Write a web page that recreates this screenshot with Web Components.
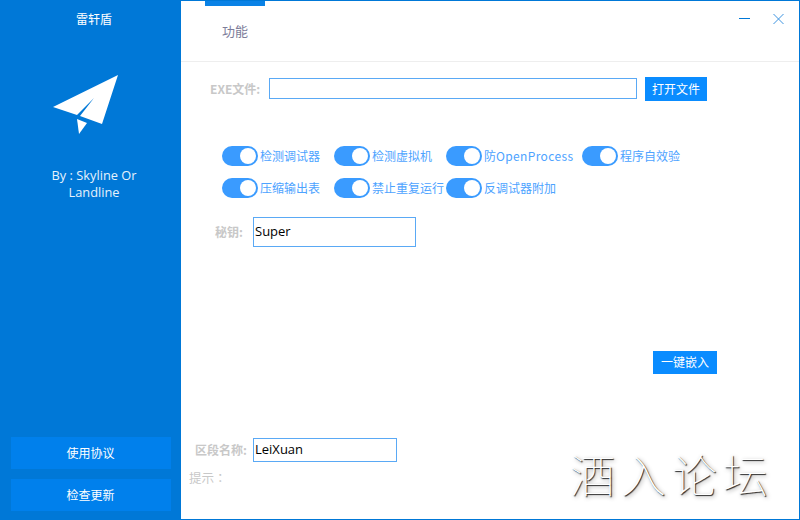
<!DOCTYPE html>
<html lang="zh">
<head>
<meta charset="utf-8">
<title>雷轩盾</title>
<style>
  html, body { margin: 0; height: 100%; overflow: hidden; background: #fff; }
  body { font: 12px/1.4 "Noto Sans CJK SC", "Open Sans", sans-serif; }
</style>
</head>
<body>
<app-window>
  <side-bar slot="side" title-text="雷轩盾" author="By : Skyline Or Landline">
    <flat-button slot="actions" wide>使用协议</flat-button>
    <flat-button slot="actions" wide>检查更新</flat-button>
  </side-bar>
  <tab-header slot="head" tab="功能"></tab-header>

  <form-row label="EXE文件:" style="--label-w:49px;--pad:29px;--gap:10px;--top:15px">
    <text-box style="--w:368px;--h:21px;margin-bottom:1px"></text-box>
    <flat-button style="--w:62px;--h:24px;margin-left:8px">打开文件</flat-button>
  </form-row>

  <switch-grid>
    <toggle-switch>检测调试器</toggle-switch>
    <toggle-switch>检测虚拟机</toggle-switch>
    <toggle-switch>防<span style="letter-spacing:.36px">OpenProcess</span></toggle-switch>
    <toggle-switch>程序自效验</toggle-switch>
    <toggle-switch>压缩输出表</toggle-switch>
    <toggle-switch>禁止重复运行</toggle-switch>
    <toggle-switch>反调试器附加</toggle-switch>
  </switch-grid>

  <form-row label="秘钥:" style="--label-w:27px;--pad:34px;--gap:11px;--top:19px">
    <text-box value="Super" style="--w:163px;--h:30px"></text-box>
  </form-row>

  <action-row><flat-button style="--w:64px;--h:23px">一键嵌入</flat-button></action-row>

  <form-row label="区段名称:" style="--label-w:51px;--pad:14px;--gap:7px;--top:64px">
    <text-box value="LeiXuan" style="--w:144px;--h:24px"></text-box>
  </form-row>
  <hint-line lang="zh-TW">提示：</hint-line>
  <water-mark>酒入论坛</water-mark>
</app-window>

<script>
// tiny helper so every component reads the same
function shadow(host, html) {
  host.attachShadow({ mode: "open" }).innerHTML = html;
  return host.shadowRoot;
}

class AppWindow extends HTMLElement {
  connectedCallback() {
    shadow(this, `
      <style>
        :host { display: flex; box-sizing: border-box; width: 800px; height: 520px; border: 1px solid #0078d7; border-left: 0; position: relative; background: #fff; }
        .side { flex: 0 0 181px; margin-top: -1px; margin-bottom: -1px; display: flex; }
        main { flex: 1; min-width: 0; display: flex; flex-direction: column; }
      </style>
      <div class="side"><slot name="side"></slot></div>
      <main><slot name="head"></slot><slot></slot></main>`);
  }
}

class SideBar extends HTMLElement {
  connectedCallback() {
    shadow(this, `
      <style>
        :host { display: flex; flex-direction: column; align-items: center; width: 181px; background: #0078d7; color: #fff; box-sizing: border-box; padding: 10px 0 9px; }
        h1 { margin: 0; font: 400 12px/17px "Noto Sans CJK SC", sans-serif; padding-left: 7px; }
        svg { display: block; margin: 48px 0 0 -9px; }
        p { margin: 32px 0 0; width: 110px; text-align: center; font: 12.8px/17px "Open Sans", sans-serif; padding-left: 7px; color: #e6f2fc; }
        .actions { margin-top: auto; display: flex; flex-direction: column; gap: 10px; }
      </style>
      <h1>${this.getAttribute("title-text")}</h1>
      <svg width="66" height="60" viewBox="53 75 66 60">
        <path fill="#fff" d="M118 75 102 124 80 116 94 98 77 115 53 107Z"/>
        <path fill="#fff" d="M77 119 87 123 79 134Z"/>
      </svg>
      <p>${this.getAttribute("author")}</p>
      <div class="actions"><slot name="actions"></slot></div>`);
  }
}

class TabHeader extends HTMLElement {
  connectedCallback() {
    shadow(this, `
      <style>
        :host { display: flex; justify-content: space-between; height: 61px; box-sizing: border-box; border-bottom: 1px solid #eee; padding-left: 24px; flex: none; }
        .tab { width: 60px; border-top: 5px solid #0a82e6; box-sizing: border-box; text-align: center; padding-top: 16px; font: 13px/18px "Noto Sans CJK SC", sans-serif; color: #7d7d9a; }
        .ctl { display: flex; gap: 23px; padding: 12px 15px 0 0; align-items: flex-start; }
        svg { display: block; }
      </style>
      <div class="tab">${this.getAttribute("tab")}</div>
      <div class="ctl">
        <svg width="11" height="11" viewBox="0 0 11 11"><path d="M0 5.5h11" stroke="#0078d7" stroke-width="1"/></svg>
        <svg width="11" height="11" viewBox="0 0 11 11"><path d="M.5 1l10 10M10.5 1l-10 10" stroke="#3d93e0" stroke-width="1"/></svg>
      </div>`);
  }
}

class FormRow extends HTMLElement {
  connectedCallback() {
    shadow(this, `
      <style>
        :host { display: flex; align-items: center; padding-left: var(--pad); margin-top: var(--top); flex: none; }
        label { width: var(--label-w); margin-right: var(--gap); white-space: nowrap; font: 700 12px/16px "Noto Sans CJK SC", sans-serif; color: #c8c8c8; }
      </style>
      <label>${this.getAttribute("label")}</label><slot></slot>`);
  }
}

class TextBox extends HTMLElement {
  connectedCallback() {
    shadow(this, `
      <style>
        :host { display: block; width: var(--w); height: var(--h); box-sizing: border-box; border: 1px solid #5aa9f5; padding: 0 1px; font: 13px/1 "Open Sans", sans-serif; color: #000; }
        div { line-height: calc(var(--h) - 4px); }
      </style>
      <div>${this.getAttribute("value") || ""}</div>`);
  }
}

class FlatButton extends HTMLElement {
  connectedCallback() {
    const wide = this.hasAttribute("wide");
    shadow(this, `
      <style>
        :host { display: flex; align-items: center; justify-content: center; flex: none; box-sizing: border-box; padding-bottom: 1px;
          width: ${wide ? "160px" : "var(--w)"}; height: ${wide ? "32px" : "var(--h)"};
          background: ${wide ? "#0080ec" : "#0a8cff"}; color: #fff; font: 12px/1 "Noto Sans CJK SC", sans-serif; }
      </style>
      <slot></slot>`);
  }
}

class SwitchGrid extends HTMLElement {
  connectedCallback() {
    shadow(this, `
      <style>
        :host { display: grid; grid-template-columns: 112px 112px 136px auto; row-gap: 12px; padding: 45px 0 0 41px; flex: none; }
      </style>
      <slot></slot>`);
  }
}

class ToggleSwitch extends HTMLElement {
  connectedCallback() {
    shadow(this, `
      <style>
        :host { display: flex; align-items: center; gap: 2px; height: 20px; white-space: nowrap; font: 12px/20px "Noto Sans CJK SC", "Open Sans", sans-serif; color: #4da3ff; }
        .track { width: 36px; height: 20px; border-radius: 10px; background: #3a9bff; display: flex; justify-content: flex-end; align-items: center; padding-right: 2px; box-sizing: border-box; flex: none; }
        .knob { width: 16px; height: 16px; border-radius: 50%; background: #fff; }
      </style>
      <span class="track"><span class="knob"></span></span><span><slot></slot></span>`);
  }
}

class ActionRow extends HTMLElement {
  connectedCallback() {
    shadow(this, `
      <style>:host { display: flex; justify-content: flex-end; padding: 104px 82px 0 0; flex: none; }</style>
      <slot></slot>`);
  }
}

class HintLine extends HTMLElement {
  connectedCallback() {
    // the TC face centres the full-width colon, like the reference
    shadow(this, `
      <style>:host { display: block; padding: 7px 0 0 8px; font: 12.5px/17px "Noto Sans CJK TC", sans-serif; color: #c8c8c8; flex: none; }</style>
      <slot></slot>`);
  }
}

// sits over the page corner, so this one is absolute
class WaterMark extends HTMLElement {
  connectedCallback() {
    shadow(this, `
      <style>
        :host { position: absolute; right: 25px; bottom: 15px; font: 100 45px/60px "Noto Sans CJK SC", sans-serif; letter-spacing: 6px; white-space: nowrap; color: #fff;
          text-shadow: 1px 1px 1px #222, 2px 2px 4px #999; }
      </style>
      <slot></slot>`);
  }
}

customElements.define("app-window", AppWindow);
customElements.define("side-bar", SideBar);
customElements.define("tab-header", TabHeader);
customElements.define("form-row", FormRow);
customElements.define("text-box", TextBox);
customElements.define("flat-button", FlatButton);
customElements.define("switch-grid", SwitchGrid);
customElements.define("toggle-switch", ToggleSwitch);
customElements.define("action-row", ActionRow);
customElements.define("hint-line", HintLine);
customElements.define("water-mark", WaterMark);
</script>
</body>
</html>
